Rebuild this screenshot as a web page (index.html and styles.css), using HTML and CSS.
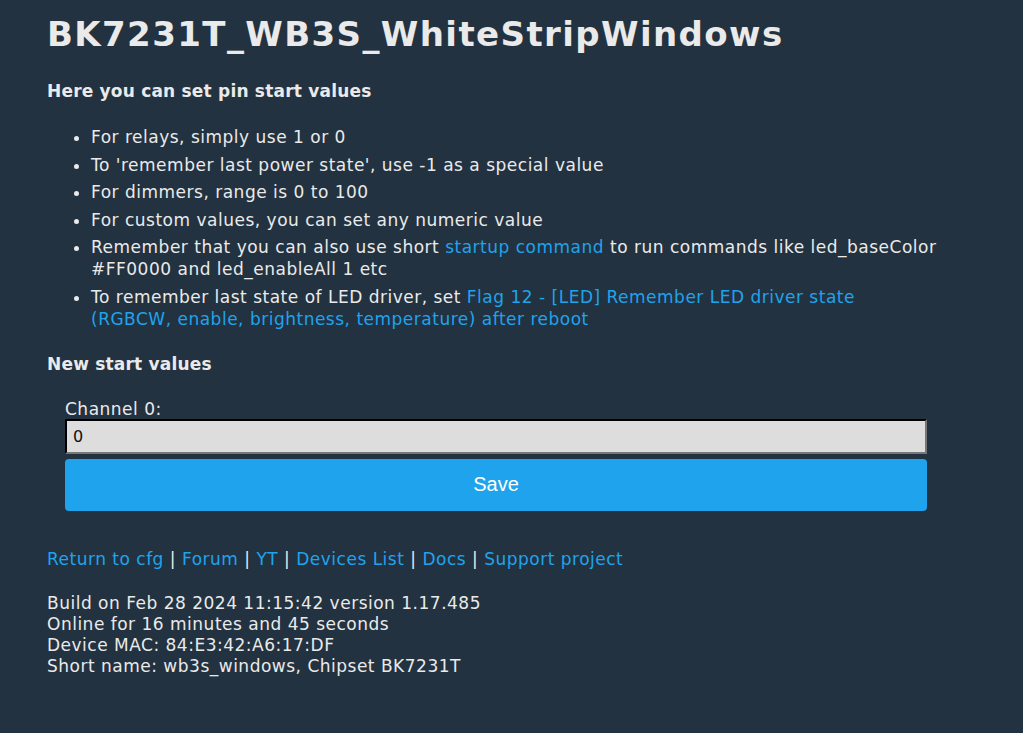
FILE: index.html
```html
<!DOCTYPE html>
<html lang="en">
<head>
  <meta charset="UTF-8">
  <title>BK7231T_WB3S_WhiteStripWindows</title>
  <link rel="stylesheet" href="styles.css">
</head>
<body>
  <div class="main">
    <h1>BK7231T_WB3S_WhiteStripWindows</h1>

    <h4>Here you can set pin start values</h4>
    <ul class="hints">
      <li>For relays, simply use 1 or 0</li>
      <li>To 'remember last power state', use -1 as a special value</li>
      <li>For dimmers, range is 0 to 100</li>
      <li>For custom values, you can set any numeric value</li>
      <li>Remember that you can also use short <a href="#">startup command</a> to run commands like led_baseColor #FF0000 and led_enableAll 1 etc</li>
      <li>To remember last state of LED driver, set <a href="#">Flag 12 - [LED] Remember LED driver state (RGBCW, enable, brightness, temperature) after reboot</a></li>
    </ul>

    <h4>New start values</h4>
    <form class="start-form">
      <label for="ch0">Channel 0:</label>
      <input type="text" id="ch0" value="0">
      <button type="button">Save</button>
    </form>

    <!-- links -->
    <div class="links">
      <a href="#">Return to cfg</a> | <a href="#">Forum</a> | <a href="#">YT</a> | <a href="#">Devices List</a> | <a href="#">Docs</a> | <a href="#">Support project</a>
    </div>

    <div class="info">
      Build on Feb 28 2024 11:15:42 version 1.17.485<br>
      Online for 16 minutes and 45 seconds<br>
      Device MAC: 84:E3:42:A6:17:DF<br>
      Short name: wb3s_windows, Chipset BK7231T
    </div>
  </div>
</body>
</html>
```

FILE: styles.css
```css
:root {
  --bg: #223240;
  --text: #eaeaea;
  --link: #1fa3ec;
}
* { box-sizing: border-box; }
body {
  margin: 0;
  background: var(--bg);
  color: var(--text);
  font-family: "DejaVu Sans", Verdana, sans-serif;
  font-size: 17px;
  line-height: 22px;
  letter-spacing: 0.5px;
}
a { color: var(--link); text-decoration: none; }

.main {
  width: 939px;
  padding: 12px 0 40px 47px;
}
h1 {
  margin: 0 0 24px;
  font-size: 34px;
  line-height: 44px;
  letter-spacing: 1.4px;
  white-space: nowrap;
}
h4 {
  margin: 0;
  font-size: 17px;
  letter-spacing: 0.2px;
}

.hints {
  margin: 24px 0 23px;
  padding-left: 44px;
}
.hints li { margin-bottom: 5.5px; }

.start-form {
  display: flex;
  flex-direction: column;
  margin: 24px 0 37px;
  padding: 0 0 0 18px;
  width: 880px;
}
.start-form label { line-height: 20px; }
.start-form input {
  height: 35px;
  padding: 4px 6px;
  background: #dddddd;
  border: 2px inset #777;
  border-top-color: #222;
  border-left-color: #222;
  font-family: "DejaVu Sans", sans-serif;
  font-size: 16px;
  color: #111;
}
.start-form button {
  margin-top: 5px;
  height: 52px;
  border: none;
  border-radius: 4px;
  background: var(--link);
  color: #fff;
  font-family: "Liberation Sans", Arial, sans-serif;
  font-size: 20px;
}

.links { margin-bottom: 23px; }
.info { line-height: 21px; }
```
